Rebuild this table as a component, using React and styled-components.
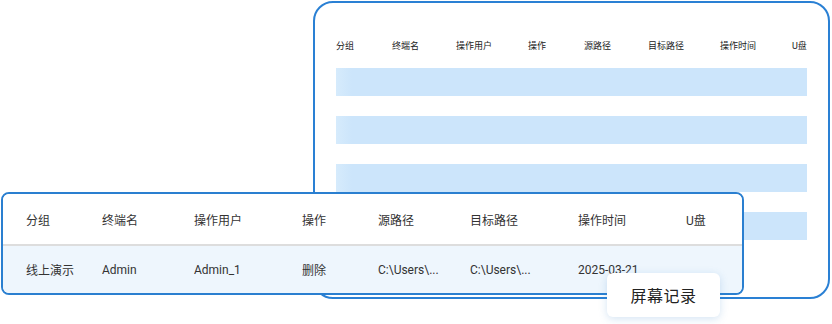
import styled, { createGlobalStyle } from "styled-components";

const GlobalStyle = createGlobalStyle`
	html, body {
		margin: 0;
		padding: 0;
		background: #ffffff;
	}
	body {
		font-family: Roboto, "Noto Sans CJK SC", sans-serif;
		color: #222;
	}
`;

const Stage = styled.div`
	position: relative;
	width: 832px;
	height: 324px;
	overflow: hidden;
	background: #ffffff;
`;

const BackCard = styled.div`
	position: absolute;
	left: 313px;
	top: 1px;
	width: 517px;
	height: 298px;
	box-sizing: border-box;
	border: 2px solid #2a80d4;
	border-radius: 20px;
	background: #ffffff;
	padding: 34px 21px 0 21px;
	display: flex;
	flex-direction: column;
	gap: 13px;
`;

const MiniHeader = styled.div`
	display: grid;
	grid-template-columns: 56px 64px 72px 56px 64px 72px 72px auto;
	font-size: 9px;
	line-height: 18px;
	font-weight: 400;
	color: #1a1a1a;
	white-space: nowrap;
`;

const MiniBars = styled.div`
	display: flex;
	flex-direction: column;
	gap: 20px;
`;

const Bar = styled.div`
	height: 28px;
	background: linear-gradient(90deg, #d6ebfc 0, #cce5fb 16px, #cce5fb 100%);
`;

const FrontCard = styled.div`
	position: absolute;
	left: 1px;
	top: 192px;
	width: 743px;
	height: 103px;
	box-sizing: border-box;
	border: 2px solid #2a7fd0;
	border-radius: 8px;
	background: #ffffff;
	overflow: hidden;
	display: flex;
	flex-direction: column;
`;

const Row = styled.div`
	display: grid;
	grid-template-columns: 76px 92px 108px 76px 92px 108px 108px auto;
	align-items: center;
	padding-left: 23px;
	font-size: 12px;
	color: #333;
	white-space: nowrap;
	height: ${(p) => p.$height}px;
	background: ${(p) => (p.$tinted ? "#eef6fd" : "#ffffff")};
	border-bottom: ${(p) => (p.$divider ? "2px solid #dddddd" : "none")};
`;

const Badge = styled.div`
	position: absolute;
	left: 607px;
	top: 273px;
	width: 113px;
	height: 44px;
	box-sizing: border-box;
	border-radius: 6px;
	background: #ffffff;
	box-shadow: 0 2px 8px rgba(60, 130, 200, 0.22);
	display: flex;
	align-items: center;
	justify-content: center;
	font-size: 16px;
	color: #222;
	letter-spacing: 0.5px;
`;

const columns = ["分组", "终端名", "操作用户", "操作", "源路径", "目标路径", "操作时间", "U盘"];
const record = ["线上演示", "Admin", "Admin_1", "删除", "C:\\Users\\...", "C:\\Users\\...", "2025-03-21", ""];

export default function App() {
	return (
		<>
			<GlobalStyle />
			<Stage>
				<BackCard>
					<MiniHeader>
						{columns.map((c) => (
							<span key={c}>{c}</span>
						))}
					</MiniHeader>
					<MiniBars>
						{[0, 1, 2, 3].map((i) => (
							<Bar key={i} />
						))}
					</MiniBars>
				</BackCard>
				<FrontCard>
					<Row $height={50} $divider>
						{columns.map((c) => (
							<span key={c}>{c}</span>
						))}
					</Row>
					<Row $height={47} $tinted>
						{record.map((v, i) => (
							<span key={i}>{v}</span>
						))}
					</Row>
				</FrontCard>
				<Badge>屏幕记录</Badge>
			</Stage>
		</>
	);
}
